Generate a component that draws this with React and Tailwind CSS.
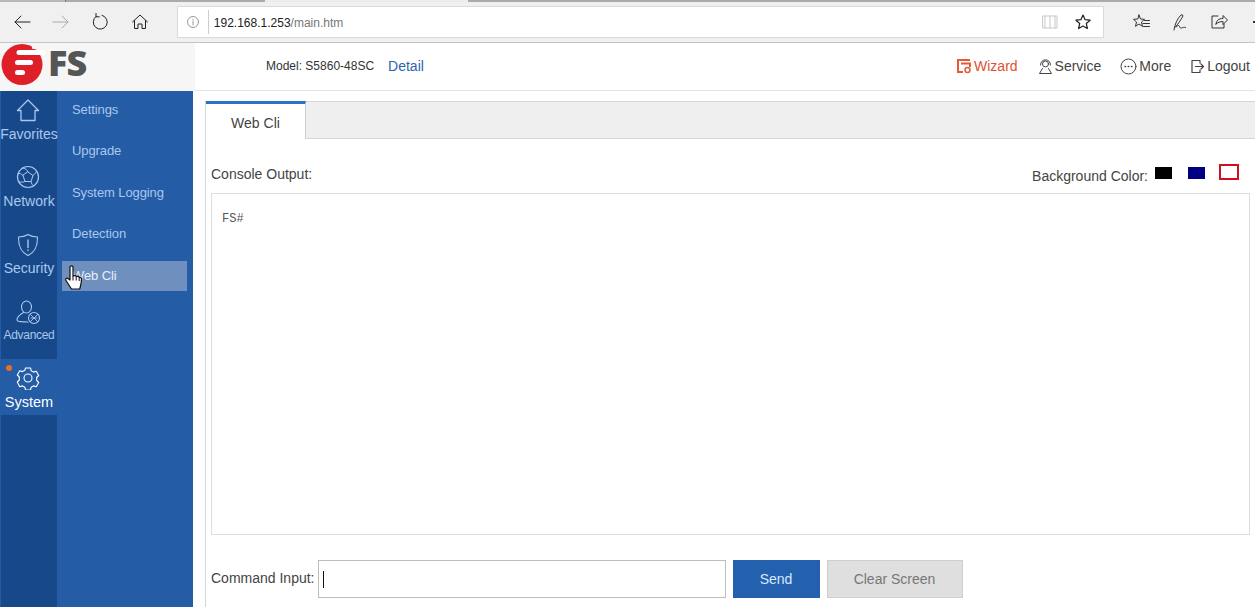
import React from "react";

const S = { fill: "none", stroke: "currentColor", strokeWidth: 1, strokeLinecap: "round", strokeLinejoin: "round" };

function Ico({ w = 20, h = 20, vb = "0 0 20 20", className = "", children }) {
  return <svg width={w} height={h} viewBox={vb} className={className} {...S}>{children}</svg>;
}

function ToolbarButton({ children, className = "" }) {
  return <div className={`flex items-center justify-center ${className}`}>{children}</div>;
}

function BrowserBar() {
  return (
    <div className="h-[43px] shrink-0 bg-[#f0f0f0] border-b border-[#c4c4c4] flex flex-col">
      <div className="h-[2px] shrink-0 flex">
        <div className="w-[65px] bg-[#b8b8b8]" />
        <div className="w-[1px] bg-[#777]" />
        <div className="w-[199px] bg-[#ababab]" />
        <div className="w-[203px] bg-[#ececec]" />
        <div className="flex-1 bg-[#ababab]" />
      </div>
      <div className="flex-1 flex items-center relative">
        <div className="w-[177px] flex items-center text-[#222] pl-[12px]">
          <ToolbarButton className="w-[20px]">
            <Ico><path d="M18 10H3M9 4l-6 6 6 6" /></Ico>
          </ToolbarButton>
          <ToolbarButton className="w-[20px] ml-[19px] text-[#aaa]">
            <Ico><path d="M2 10h15M11 4l6 6-6 6" /></Ico>
          </ToolbarButton>
          <ToolbarButton className="w-[20px] ml-[19px]">
            <Ico><path d="M6 4.500A7 7 0 1 0 12 3.300M6 1.500v3.300h3.300" /></Ico>
          </ToolbarButton>
          <ToolbarButton className="w-[20px] ml-[20px]">
            <Ico><path d="M2.500 10 10 3l7.500 7M4.500 8.500V16.500H8v-4.500h4v4.500h3.500V8.500" /></Ico>
          </ToolbarButton>
        </div>
        <div className="w-[928px] h-[32px] bg-white border border-[#dadada] flex items-center text-[12px]">
          <div className="w-[30px] flex justify-center text-[#999]">
            <Ico w={14} h={14} vb="0 0 14 14">
              <circle cx="7" cy="7" r="5.500" />
              <path d="M7 6.200V10M7 4.200v.6" />
            </Ico>
          </div>
          <div className="w-[1px] h-[24px] bg-[#ccc]" />
          <span className="ml-[5px] mt-[2px] text-[#222]">192.168.1.253<span className="text-[#777]">/main.htm</span></span>
          <div className="ml-auto flex items-center pr-[11px]">
            <Ico w={16} h={16} vb="0 0 16 16" className="text-[#c8c8c8] mr-[16px]">
              <path d="M1 2h14v12H1zM8 2v12M3 2v12M13 2v12" />
            </Ico>
            <Ico w={18} h={18} vb="0 0 18 18" className="text-[#222]">
              <path d="m9 2 2.100 4.700 5 .5-3.800 3.300 1.100 5L9 13l-4.400 2.500 1.100-5L1.900 7.200l5-.5z" strokeWidth="1.200" />
            </Ico>
          </div>
        </div>
        <div className="flex-1 flex items-center text-[#333] pl-[28px]">
          <Ico w={18} h={18} vb="0 0 18 18">
            <path d="M7 2 8.500 6l4 .3-3 2.700 1 4.400L7 11l-3.500 2.400 1-4.400-3-2.700 4-.3zM12.500 7.500h5M11 10.500h6.500M11.500 13.500h6" />
          </Ico>
          <Ico w={20} h={20} className="ml-[21px]">
            <path d="M3 18c1-6 3-11 7-15 1.500-1 2.500.5 1.500 2-2.500 4-4.500 7-7 10 1.500.5 1.500-2 3-1.500s1 3 3 2.500 2-1 4-.5" />
          </Ico>
          <Ico w={18} h={18} vb="0 0 18 18" className="ml-[19px]">
            <path d="M8 3H2v12h12v-4M6 11c.5-3.500 2.500-5.500 7-5.500V2.500l4.500 4.500-4.500 4.500v-3C10 8.500 8 9.500 6 11z" />
          </Ico>
          <span className="ml-[25px] w-[2px] h-[2px] bg-[#333]" />
        </div>
      </div>
    </div>
  );
}

function Logo() {
  return (
    <div className="w-[195px] shrink-0 bg-[#f6f6f6] flex items-start h-full">
      <svg width="45" height="42" viewBox="0 0 45 42" className="mt-[1px] ml-[1px]">
        <circle cx="21" cy="20.500" r="20.500" fill="#df1f28" />
        <path d="M18 8.500h24" stroke="#fff" strokeWidth="5" strokeLinecap="round" />
        <path d="M31 3.500 43 5" stroke="#f6f6f6" strokeWidth="2.500" />
        <path d="M16.500 18.500h13" stroke="#fff" strokeWidth="5" strokeLinecap="round" />
        <path d="M16.500 28.500h5" stroke="#fff" strokeWidth="5" strokeLinecap="round" />
      </svg>
      <span className="ml-[2px] -mt-[1px] text-[36px] leading-[42px] font-extrabold text-[#555] font-['Open_Sans',sans-serif] tracking-[-1px]">FS</span>
    </div>
  );
}

function HeaderLink({ icon, label, className = "" }) {
  return (
    <div className={`flex items-center text-[14px] ${className}`}>
      <span className="mr-[2px] flex">{icon}</span>
      {label}
    </div>
  );
}

function Header() {
  return (
    <div className="h-[48px] shrink-0 flex bg-white">
      <Logo />
      <div className="flex-1 border-b border-[#e4e4e4] flex items-center pl-[71px] pb-[1px]">
        <span className="text-[12px] text-[#333]">Model: S5860-48SC</span>
        <span className="ml-[14px] text-[14px] text-[#2b64ad]">Detail</span>
        <div className="ml-auto flex items-center pr-[5px] text-[#444]">
          <HeaderLink
            className="text-[#e2502f]"
            label="Wizard"
            icon={
              <svg width="16" height="16" viewBox="0 0 16 16" fill="none" stroke="#e8593a" strokeWidth="2">
                <path d="M14 2H2v12h5M5 5.500h9V9" />
                <circle cx="11.500" cy="12" r="2.500" strokeWidth="1.500" />
              </svg>
            }
          />
          <HeaderLink
            className="ml-[20px]"
            label="Service"
            icon={
              <Ico w={15} h={17} vb="0 0 15 17">
                <circle cx="7.500" cy="6" r="3" />
                <path d="M2.500 7c0-7 10-7 10 0M4.500 10.500 1.500 15.500h12l-3-5" />
              </Ico>
            }
          />
          <HeaderLink
            className="ml-[19px]"
            label="More"
            icon={
              <Ico w={17} h={17} vb="0 0 17 17">
                <circle cx="8.500" cy="8.500" r="7.500" />
                <path d="M5 8.500h.6M8.200 8.500h.6M11.400 8.500h.6" strokeWidth="1.400" />
              </Ico>
            }
          />
          <HeaderLink
            className="ml-[19px]"
            label="Logout"
            icon={
              <Ico w={15} h={15} vb="0 0 15 15">
                <path d="M10 4V1.500H2v12h8V11M5.500 7.500h8M11 5l2.500 2.500L11 10" strokeWidth="1.200" />
              </Ico>
            }
          />
        </div>
      </div>
    </div>
  );
}

function RailItem({ label, icon, h, small, active, dot }) {
  return (
    <div className={`relative flex flex-col items-center ${h} ${active ? "bg-[#245ca6] text-white" : "text-[#a9c8ee]"}`}>
      {dot && <span className="absolute left-[5px] top-[6px] w-[6px] h-[6px] rounded-full bg-[#e8701f]" />}
      {icon}
      <span className={`whitespace-nowrap leading-[16px] ${small ? "text-[12px] tracking-[-0.3px]" : active ? "text-[14.500px]" : "text-[14px]"}`}>{label}</span>
    </div>
  );
}

function SubItem({ label, active, cursor }) {
  return (
    <div className={`relative h-[30px] pl-[10px] flex items-center text-[13px] tracking-[-0.1px] ${active ? "bg-[#6f90bf] text-[#e6eefa] mt-[12px]" : "text-[#a9c8ee] mb-[11.330px]"}`}>
      {label}
      {cursor && (
        <svg width="17" height="26" viewBox="0 0 17 26" className="absolute left-[3px] top-[4px]">
          <path d="M5 2c0-1.500 3-1.500 3 0v9c1.500-.8 3-.5 3.200.5 1.300-.5 2.800 0 3 1 1-.3 2.300.2 2.300 1.500 0 4-.7 6-1.800 10H6.500L1 15.500c-1-1.500.5-3 2-2l2 1.500z" fill="#fff" stroke="#111" strokeWidth="1.200" strokeLinejoin="round" />
          <path d="M8 11v4.500M11.200 11.500v4M14.200 12.500v3.500" stroke="#111" strokeWidth="1" fill="none" />
        </svg>
      )}
    </div>
  );
}

function Sidebar() {
  return (
    <div className="w-[193px] shrink-0 flex bg-[#245ca6]">
      <div className="w-[56px] shrink-0 ml-[1px] bg-[#17488a] flex flex-col">
        <RailItem
          h="h-[67px]"
          label="Favorites"
          icon={
            <Ico w={24} h={24} vb="0 0 24 24" className="mt-[7px] mb-[4px] -ml-[2px]">
              <path d="M1.500 12.500 12 2l10.500 10.500H19v10H5v-10z" strokeWidth="1.300" />
            </Ico>
          }
        />
        <RailItem
          h="h-[67px]"
          label="Network"
          icon={
            <Ico w={24} h={24} vb="0 0 24 24" className="mt-[7px] mb-[4px] -ml-[2px]">
              <circle cx="12" cy="12" r="10.500" strokeWidth="1.200" />
              <path d="M12 7 17 10.500 15 16.500H9L7 10.500z" />
              <path d="M12 7C11 4.500 9 3 6.500 3M17 10.500C19 9 20.500 7.500 20.500 6M15 16.500C15.500 19 16.500 20.500 18 21M9 16.500C7 17.500 5 17.500 3 16.500M7 10.500C5 8.500 3.500 8 2 8.500" />
            </Ico>
          }
        />
        <RailItem
          h="h-[67px]"
          label="Security"
          icon={
            <Ico w={24} h={24} vb="0 0 24 24" className="mt-[8px] mb-[3px] -ml-[2px]">
              <path d="M12 1.500c3 2 6 2.500 9.500 2.500 0 9-2 15-9.500 18.500C4.500 19 2.500 13 2.500 4c3.500 0 6.500-.5 9.500-2.500z" strokeWidth="1.200" />
              <path d="M12 7v7.500M12 17v.5" strokeWidth="1.400" />
            </Ico>
          }
        />
        <RailItem
          h="h-[67px]"
          small
          label="Advanced"
          icon={
            <Ico w={24} h={26} vb="0 0 24 26" className="mt-[8px] mb-[1px] -ml-[2px]">
              <ellipse cx="10.500" cy="7" rx="5" ry="6" strokeWidth="1.100" />
              <path d="M7.500 12.500C3 15 1 17 1 20c0 1.500 2 2 11 2" strokeWidth="1.100" />
              <circle cx="18" cy="18" r="5.500" strokeWidth="1.100" />
              <path d="m14.500 14.500 7 7M21.500 14.500l-7 7M15 18h6" strokeWidth="0.900" />
            </Ico>
          }
        />
        <RailItem
          h="h-[56px]"
          active
          dot
          label="System"
          icon={
            <Ico w={24} h={24} vb="0 0 24 24" className="mt-[7px] mb-[4px] -ml-[2px]">
              <circle cx="12" cy="12" r="4" strokeWidth="1.100" />
              <path d="M9.500 2h5l.7 2.800 2.300 1.300 2.800-.8 2.400 4.200-2 2v3l2 2-2.400 4.200-2.800-.8-2.300 1.300-.7 2.800h-5l-.7-2.800-2.300-1.300-2.800.8L1.300 16l2-2v-3l-2-2 2.400-4.200 2.800.8 2.300-1.300z" strokeWidth="1.100" />
            </Ico>
          }
        />
      </div>
      <div className="flex-1 pt-[3.700px] pl-[5px] pr-[6px]">
        <SubItem label="Settings" />
        <SubItem label="Upgrade" />
        <SubItem label="System Logging" />
        <SubItem label="Detection" />
        <SubItem label="Web Cli" active cursor />
      </div>
    </div>
  );
}

function Main() {
  return (
    <div className="flex-1 min-w-0 pl-[12px] pt-[10px] bg-white">
      <div className="h-full border-l border-[#d6d6d6] flex flex-col">
        <div className="h-[38px] shrink-0 flex bg-[#efefef] border-t border-b border-[#d6d6d6]">
          <div className="w-[100px] -mt-[1px] h-[38px] pt-[4px] bg-white border-t-[3px] border-t-[#2a72c6] border-r border-r-[#cfcfcf] flex items-center justify-center text-[14px] text-[#444]">
            Web Cli
          </div>
        </div>
        <div className="flex-1 flex flex-col pl-[5px] pr-[5px]">
          <div className="h-[54px] shrink-0 flex items-start text-[14px] text-[#444]">
            <span className="mt-[27px] leading-[16px]">Console Output:</span>
            <div className="ml-auto flex items-start mt-[26px] pr-[11px]">
              <span className="mt-[3px] leading-[16px]">Background Color:</span>
              <span className="ml-[7px] mt-[2px] w-[17px] h-[12px] bg-black" />
              <span className="ml-[16px] mt-[2px] w-[17px] h-[12px] bg-[#000080]" />
              <span className="ml-[14px] -mt-[1px] w-[20px] h-[16px] bg-white border-2 border-[#d0101c]" />
            </div>
          </div>
          <div className="h-[342px] shrink-0 border border-[#dedede] px-[10px] pt-[16px] font-['Liberation_Mono',monospace] text-[12px] leading-[18px] text-[#555]">
            FS#
          </div>
          <div className="flex items-start mt-[25px] text-[14px] text-[#444]">
            <span className="mt-[10px] leading-[16px]">Command Input:</span>
            <div className="ml-[3px] w-[408px] h-[38px] border border-[#bdbdbd] flex items-center pl-[4px]">
              <span className="w-[1px] h-[17px] bg-[#111]" />
            </div>
            <div className="ml-[7px] w-[87px] h-[38px] bg-[#2361ae] text-[#d9e8fb] flex items-center justify-center">Send</div>
            <div className="ml-[7px] w-[136px] h-[38px] bg-[#dfdfdf] border border-[#cfcfcf] text-[#777] flex items-center justify-center">Clear Screen</div>
          </div>
        </div>
      </div>
    </div>
  );
}

export default function App() {
  return (
    <div className="w-[1255px] h-[607px] overflow-hidden flex flex-col bg-white font-['Liberation_Sans',Arial,sans-serif]">
      <BrowserBar />
      <Header />
      <div className="flex-1 flex min-h-0">
        <Sidebar />
        <Main />
      </div>
    </div>
  );
}
